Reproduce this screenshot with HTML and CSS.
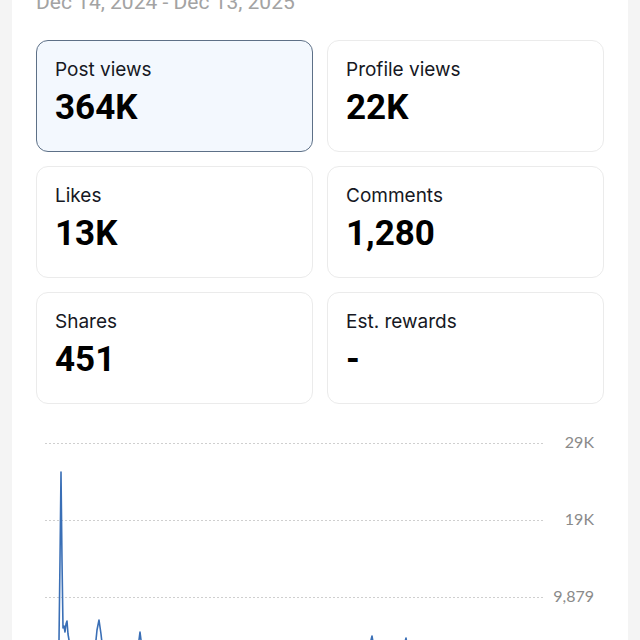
FILE: index.html
```html
<!DOCTYPE html>
<html>
<head>
<meta charset="utf-8">
<link rel="stylesheet" href="styles.css">
</head>
<body>
<div class="panel">
  <div class="date">Dec 14, 2024 - Dec 13, 2025</div>
  <div class="grid">
    <div class="card active"><div class="label">Post views</div><div class="value">364K</div></div>
    <div class="card"><div class="label">Profile views</div><div class="value">22K</div></div>
    <div class="card"><div class="label">Likes</div><div class="value">13K</div></div>
    <div class="card"><div class="label">Comments</div><div class="value">1,280</div></div>
    <div class="card"><div class="label">Shares</div><div class="value">451</div></div>
    <div class="card"><div class="label">Est. rewards</div><div class="value">-</div></div>
  </div>
  <svg class="chart" width="568" height="224" viewBox="36 418 568 224">
    <g class="grid-lines">
      <line x1="45" y1="443.5" x2="543" y2="443.5"/>
      <line x1="45" y1="520.5" x2="543" y2="520.5"/>
      <line x1="45" y1="597.5" x2="543" y2="597.5"/>
    </g>
    <g class="axis">
      <text x="594" y="448">29K</text>
      <text x="594" y="525">19K</text>
      <text x="594" y="602">9,879</text>
    </g>
    <path class="line" d="M45,668 L56,664 L59,640 L60,560 L61,472 L62,560 L63,628 L64,626 L65,632 L66,624 L67,621 L68,634 L70,646 L80,652 L95,650 L97,630 L99,620 L101,634 L103,652 L120,655 L138,652 L139,640 L140,632 L141,640 L143,655 L200,660 L300,662 L369,655 L371,640 L372,636 L373,642 L375,655 L404,655 L405,642 L406,638 L407,644 L409,656 L500,662 L604,664"/>
  </svg>
</div>
</body>
</html>
```
FILE: styles.css
```css
html, body {
  margin: 0;
  padding: 0;
  background: #f4f4f4;
  overflow: hidden;
}
.panel {
  margin: 0 12px;
  background: #ffffff;
  height: 640px;
  padding: 0 24px;
  box-sizing: border-box;
  font-family: "Roboto", "Inter", sans-serif;
  color: #161823;
  overflow: hidden;
}
.date {
  margin-top: -10px;
  font-size: 21px;
  line-height: 24px;
  color: #a3a3a3;
  height: 24px;
}
.grid {
  margin-top: 26px;
  display: grid;
  grid-template-columns: 277px 277px;
  grid-auto-rows: 112px;
  gap: 14px;
}
.card {
  box-sizing: border-box;
  border: 1px solid #ebebeb;
  border-radius: 12px;
  padding: 18px 18px;
  background: #fff;
}
.card.active {
  background: #f3f8fe;
  border-color: #5d7087;
}
.label {
  font-family: "Inter", "Roboto", sans-serif;
  font-size: 19px;
  line-height: 22px;
  color: #161823;
}
.value {
  margin-top: 7px;
  font-size: 35px;
  line-height: 40px;
  font-weight: 700;
  color: #000;
}
.chart {
  display: block;
  margin-top: 14px;
}
.grid-lines line {
  stroke: #cfcfcf;
  stroke-width: 1;
  stroke-dasharray: 2 2;
}
.axis text {
  font-family: "Lato", "Open Sans", sans-serif;
  font-size: 16px;
  fill: #8a8a8a;
  text-anchor: end;
}
.line {
  fill: none;
  stroke: #3a6fb6;
  stroke-width: 1.6;
  stroke-linejoin: round;
}
```
